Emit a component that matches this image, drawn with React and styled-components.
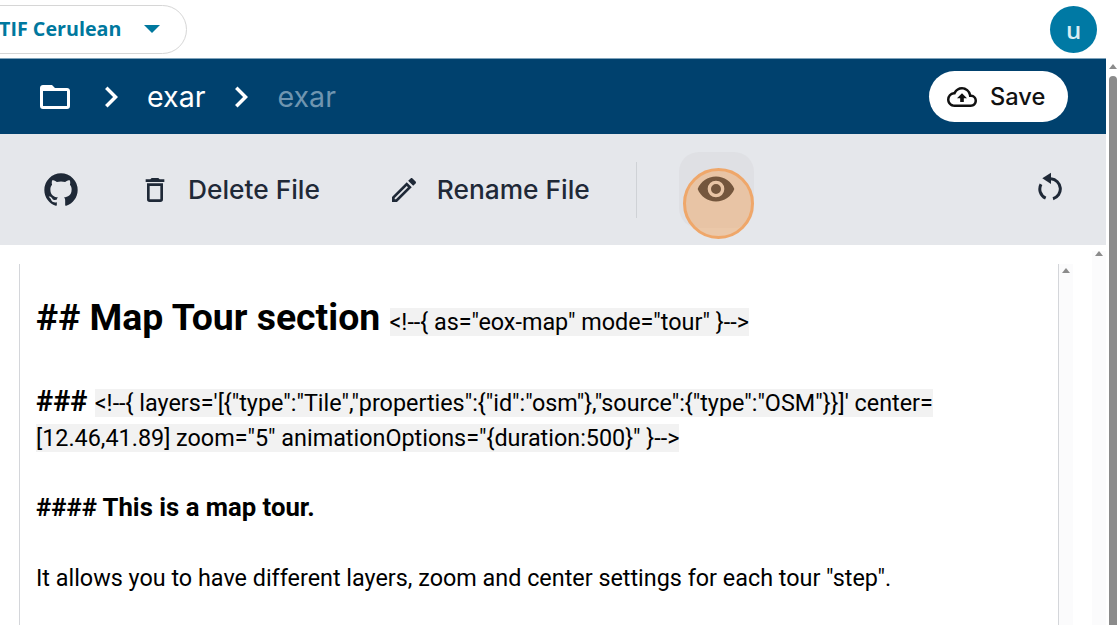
import React from "react";
import styled, { createGlobalStyle } from "styled-components";
import { MdOutlineCloudUpload } from "react-icons/md";

const paths = {
  folder: "M20,18H4V8H20M20,6H12L10,4H4C2.89,4 2,4.89 2,6V18A2,2 0 0,0 4,20H20A2,2 0 0,0 22,18V8C22,6.89 21.1,6 20,6Z",
  chevron: "M8.59,16.58L13.17,12L8.59,7.41L10,6L16,12L10,18L8.59,16.58Z",
  github: "M12,2A10,10 0 0,0 2,12C2,16.42 4.87,20.17 8.84,21.5C9.34,21.58 9.5,21.27 9.5,21C9.5,20.77 9.5,20.14 9.5,19.31C6.73,19.91 6.14,17.97 6.14,17.97C5.68,16.81 5.03,16.5 5.03,16.5C4.12,15.88 5.1,15.9 5.1,15.9C6.1,15.97 6.63,16.93 6.63,16.93C7.5,18.45 8.97,18 9.54,17.76C9.63,17.11 9.89,16.67 10.17,16.42C7.95,16.17 5.62,15.31 5.62,11.5C5.62,10.39 6,9.5 6.65,8.79C6.55,8.54 6.2,7.5 6.75,6.15C6.75,6.15 7.59,5.88 9.5,7.17C10.29,6.95 11.15,6.84 12,6.84C12.85,6.84 13.71,6.95 14.5,7.17C16.41,5.88 17.25,6.15 17.25,6.15C17.8,7.5 17.45,8.54 17.35,8.79C18,9.5 18.38,10.39 18.38,11.5C18.38,15.32 16.04,16.16 13.81,16.41C14.17,16.72 14.5,17.33 14.5,18.26C14.5,19.6 14.5,20.68 14.5,21C14.5,21.27 14.66,21.59 15.17,21.5C19.14,20.16 22,16.42 22,12A10,10 0 0,0 12,2Z",
  trash: "M6,19A2,2 0 0,0 8,21H16A2,2 0 0,0 18,19V7H6V19M8,9H16V19H8V9M15.5,4L14.5,3H9.5L8.5,4H5V6H19V4H15.5Z",
  pencil: "M14.06,9L15,9.94L5.92,19H5V18.08L14.06,9M17.66,3C17.41,3 17.15,3.1 16.96,3.29L15.13,5.12L18.88,8.87L20.71,7.04C21.1,6.65 21.1,6 20.71,5.63L18.37,3.29C18.17,3.09 17.92,3 17.66,3M14.06,6.19L3,17.25V21H6.75L17.81,9.94L14.06,6.19Z",
  eye: "M12,9A3,3 0 0,0 9,12A3,3 0 0,0 12,15A3,3 0 0,0 15,12A3,3 0 0,0 12,9M12,17A5,5 0 0,1 7,12A5,5 0 0,1 12,7A5,5 0 0,1 17,12A5,5 0 0,1 12,17M12,4.5C7,4.5 2.73,7.61 1,12C2.73,16.39 7,19.5 12,19.5C17,19.5 21.27,16.39 23,12C21.27,7.61 17,4.5 12,4.5Z",
};

const RestoreIcon = () => (
  <RestoreSvg width="24" height="29" viewBox="0 0 24 29" fill="none" stroke="currentColor" strokeWidth="3">
    <path d="M13 6.85 A10.2 10.2 0 0 1 15 26.8" />
    <path d="M7.7 26.2 A10.2 10.2 0 0 1 3 12.2" />
    <path d="M4.3 6.3 L13 0.7 V12 Z" fill="currentColor" stroke="none" />
  </RestoreSvg>
);

const App = () => {
  return (
    <Page>
      <GlobalStyle />
      <TopBar>
        <LayerSelect>
          <LayerName>TIF Cerulean</LayerName>
          <Caret />
        </LayerSelect>
        <Avatar>u</Avatar>
      </TopBar>
      <Main>
        <Content>
          <PathBar>
            <Crumbs>
              <FolderSlot>
                <Icon size={36} d={paths.folder} />
              </FolderSlot>
              <Icon size={42} d={paths.chevron} />
              <Crumb>exar</Crumb>
              <Icon size={42} d={paths.chevron} />
              <Crumb $muted>exar</Crumb>
            </Crumbs>
            <SaveButton>
              <MdOutlineCloudUpload size={30} />
              Save
            </SaveButton>
          </PathBar>
          <Toolbar>
            <Icon size={40} d={paths.github} />
            <ToolButton>
              <Icon size={32} d={paths.trash} />
              Delete File
            </ToolButton>
            <ToolButton>
              <Icon size={32} d={paths.pencil} />
              Rename File
            </ToolButton>
            <Divider />
            <PreviewButton>
              <Icon size={40} d={paths.eye} />
              <TouchRing />
            </PreviewButton>
            <Spacer />
            <RestoreIcon />
          </Toolbar>
          <EditorPane>
            <Editor>
              <Heading>
                <strong>## Map Tour section</strong> <Code>{`<!--{ as="eox-map" mode="tour" }-->`}</Code>
              </Heading>
              <CodeBlock>
                <strong>### </strong>
                <Code>{`<!--{ layers='[{"type":"Tile","properties":{"id":"osm"},"source":{"type":"OSM"}}]' center=[12.46,41.89] zoom="5" animationOptions="{duration:500}" }-->`}</Code>
              </CodeBlock>
              <SubHeading>#### This is a map tour.</SubHeading>
              <Paragraph>It allows you to have different layers, zoom and center settings for each tour "step".</Paragraph>
            </Editor>
            <Scrollbar $top={4} />
            <OuterGutter>
              <Scrollbar $top={0} />
            </OuterGutter>
          </EditorPane>
        </Content>
        <PageScroll>
          <ArrowUp />
          <Thumb />
        </PageScroll>
      </Main>
    </Page>
  );
};

const Icon = ({ size, d }) => (
  <svg width={size} height={size} viewBox="0 0 24 24" fill="currentColor" aria-hidden="true">
    <path d={d} />
  </svg>
);

const GlobalStyle = createGlobalStyle`
  html, body { margin: 0; padding: 0; background: #fff; overflow: hidden; }
`;

const Page = styled.div`
  display: flex;
  flex-direction: column;
  width: 1120px;
  height: 625px;
  overflow: hidden;
  font-family: Inter, "Liberation Sans", sans-serif;
`;
const TopBar = styled.header`
  display: flex;
  flex: 0 0 58px;
  align-items: center;
  justify-content: space-between;
  padding-right: 23px;
  box-sizing: border-box;
`;
const LayerSelect = styled.div`
  display: flex;
  align-items: center;
  gap: 23px;
  box-sizing: border-box;
  width: 221px;
  height: 49px;
  margin-left: -34px;
  padding-left: 32px;
  border: 1px solid #d6d6d6;
  border-radius: 25px;
  color: #00789e;
  font-family: "Open Sans", sans-serif;
  font-size: 19.7px;
  font-weight: 700;
`;
const LayerName = styled.span`
  margin-top: -2px;
`;
const Caret = styled.span`
  width: 0;
  height: 0;
  border-left: 8px solid transparent;
  border-right: 8px solid transparent;
  border-top: 8px solid #00789e;
`;
const Avatar = styled.div`
  display: flex;
  align-items: center;
  justify-content: center;
  width: 47px;
  height: 47px;
  border-radius: 50%;
  background: #0079a4;
  color: #d9ecf3;
  font-family: "Open Sans", sans-serif;
  font-size: 24px;
  font-weight: 600;
`;
const Main = styled.div`
  display: flex;
  flex: 1;
  min-height: 0;
`;
const Content = styled.main`
  display: flex;
  flex: 1;
  flex-direction: column;
  min-width: 0;
`;
const PathBar = styled.div`
  display: flex;
  flex: 0 0 76px;
  align-items: center;
  justify-content: space-between;
  box-sizing: border-box;
  padding: 0 38px 0 37px;
  border-top: 1px solid #7fa3bb;
  background: #00416e;
  color: #fff;
`;
const Crumbs = styled.div`
  display: flex;
  align-items: center;
  gap: 15px;
`;
const FolderSlot = styled.span`
  display: flex;
  margin-right: 2px;
`;
const Crumb = styled.span`
  font-size: 28.6px;
  color: ${(p) => (p.$muted ? "#6f95b0" : "#fff")};
`;
const SaveButton = styled.button`
  display: flex;
  align-items: center;
  gap: 13px;
  box-sizing: border-box;
  width: 139px;
  height: 51px;
  padding: 0 0 0 18px;
  border: 0;
  border-radius: 26px;
  background: #fff;
  color: #111;
  font-family: inherit;
  font-size: 23.6px;
  font-weight: 500;
`;
const Toolbar = styled.div`
  display: flex;
  flex: 0 0 111px;
  align-items: center;
  box-sizing: border-box;
  padding: 0 44px 0 41px;
  background: #e5e7eb;
  color: #1f2937;
`;
const ToolButton = styled.div`
  display: flex;
  align-items: center;
  gap: 17px;
  margin-left: 58px;
  font-size: 26.3px;
  font-weight: 500;
  & + & {
    margin-left: 68px;
  }
`;
const Divider = styled.div`
  width: 1px;
  height: 56px;
  margin-left: 46px;
  background: #cfd2d6;
`;
const PreviewButton = styled.div`
  position: relative;
  display: flex;
  justify-content: center;
  box-sizing: border-box;
  width: 75px;
  height: 76px;
  margin: 0 0 0 42px;
  padding-top: 17px;
  border-radius: 20px;
  background: #dfe0e4;
`;
const TouchRing = styled.span`
  position: absolute;
  left: 4px;
  top: 16px;
  box-sizing: border-box;
  width: 71px;
  height: 71px;
  border: 3px solid #efa76a;
  border-radius: 50%;
  background: rgba(245, 155, 70, 0.4);
`;
const Spacer = styled.div`
  flex: 1;
`;
const RestoreSvg = styled.svg`
  margin-top: -6px;
`;
const EditorPane = styled.div`
  display: flex;
  flex: 1;
  min-height: 0;
  padding: 19px 0 0 19px;
`;
const Editor = styled.div`
  flex: 1;
  min-width: 0;
  box-sizing: border-box;
  padding: 27px 120px 0 16px;
  border-left: 1px solid #d4d6da;
  border-right: 1px solid #d4d6da;
  color: #000;
  font-family: Roboto, sans-serif;
  font-size: 23.37px;
  line-height: 35px;
`;
const Heading = styled.div`
  font-size: 37.4px;
  line-height: 52px;
`;
const Code = styled.code`
  background: #f2f2f2;
  font-family: Roboto, sans-serif;
  font-size: 23.37px;
`;
const CodeBlock = styled.div`
  margin-top: 36px;
  strong {
    font-size: 29px;
  }
`;
const SubHeading = styled.div`
  margin-top: 34px;
  font-size: 25.7px;
  font-weight: 700;
`;
const Paragraph = styled.div`
  margin-top: 36px;
`;
const Scrollbar = styled.div`
  position: relative;
  flex: 0 0 14px;
  width: 14px;
  background: #fbfbfc;
  &::before {
    content: "";
    position: absolute;
    left: 3px;
    top: ${(p) => p.$top}px;
    border-left: 4px solid transparent;
    border-right: 4px solid transparent;
    border-bottom: 5px solid #8b8b8b;
  }
`;
const OuterGutter = styled.div`
  display: flex;
  flex: 0 0 33px;
  justify-content: flex-end;
  margin-top: -19px;
  padding-top: 6px;
`;
const PageScroll = styled.div`
  display: flex;
  flex: 0 0 14px;
  flex-direction: column;
  align-items: center;
  padding-top: 6px;
`;
const ArrowUp = styled.span`
  flex: none;
  border-left: 4px solid transparent;
  border-right: 4px solid transparent;
  border-bottom: 5px solid #8b8b8b;
`;
const Thumb = styled.div`
  flex: 1;
  width: 8px;
  margin-top: 7px;
  border-radius: 4px 4px 0 0;
  background: #8b8b8b;
`;

export default App;
